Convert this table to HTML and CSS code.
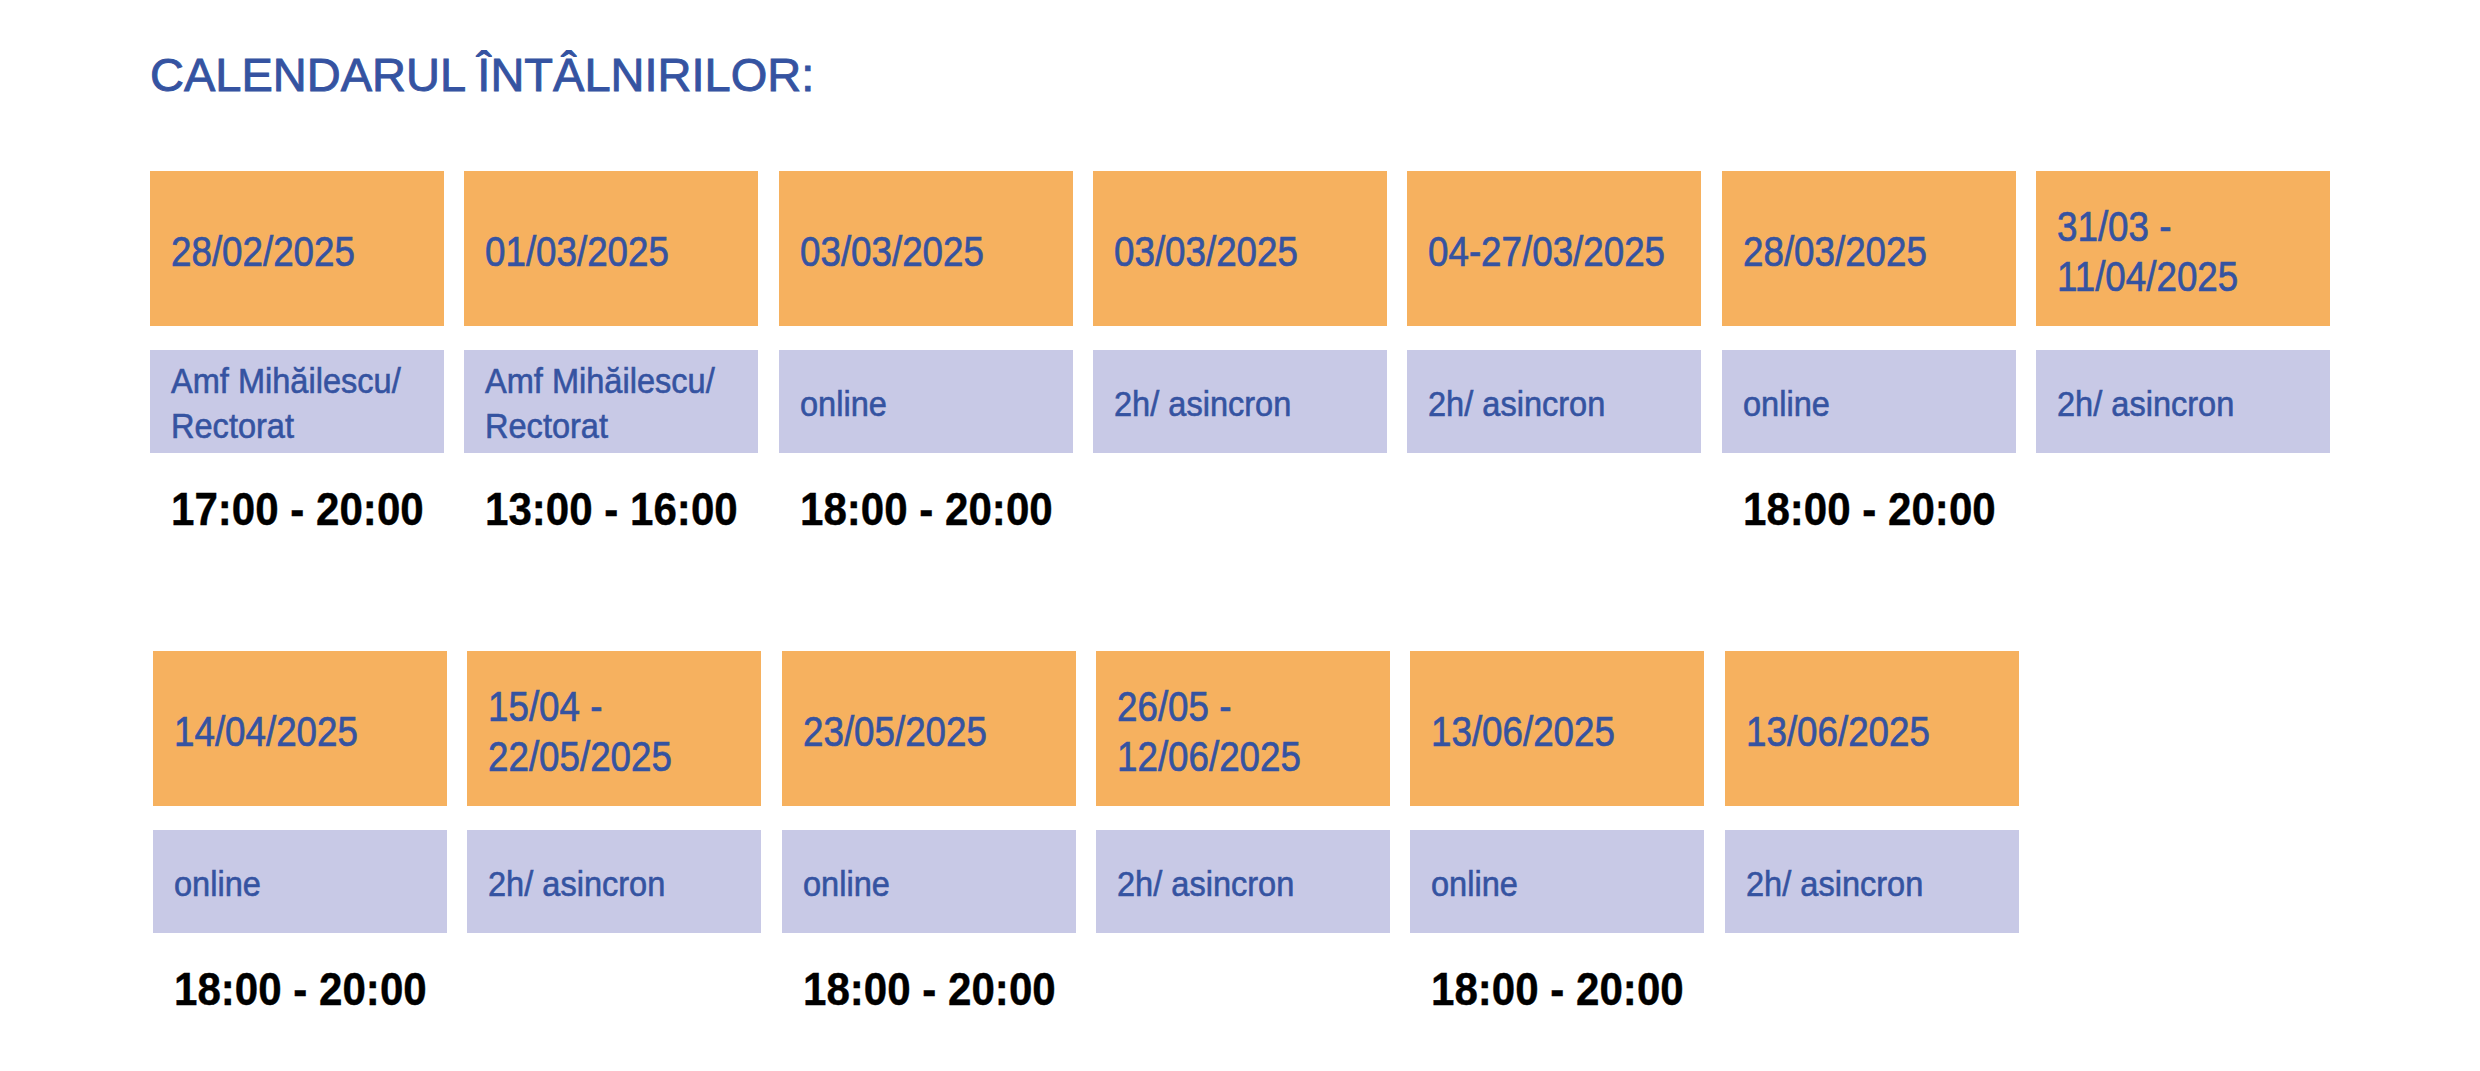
FILE: index.html
```html
<!DOCTYPE html>
<html lang="ro">
<head>
<meta charset="utf-8">
<title>Calendarul întâlnirilor</title>
<link rel="stylesheet" href="styles.css">
</head>
<body>
<div class="page">
  <h1 class="title">CALENDARUL ÎNTÂLNIRILOR:</h1>

  <div class="row row-first">
    <div class="cell">
      <div class="date"><span class="cond">28/02/2025</span></div>
      <div class="place"><span class="cond">Amf Mihăilescu/<br>Rectorat</span></div>
      <div class="time"><span class="cond">17:00 - 20:00</span></div>
    </div>
    <div class="cell">
      <div class="date"><span class="cond">01/03/2025</span></div>
      <div class="place"><span class="cond">Amf Mihăilescu/<br>Rectorat</span></div>
      <div class="time"><span class="cond">13:00 - 16:00</span></div>
    </div>
    <div class="cell">
      <div class="date"><span class="cond">03/03/2025</span></div>
      <div class="place"><span class="cond">online</span></div>
      <div class="time"><span class="cond">18:00 - 20:00</span></div>
    </div>
    <div class="cell">
      <div class="date"><span class="cond">03/03/2025</span></div>
      <div class="place"><span class="cond">2h/ asincron</span></div>
      <div class="time"></div>
    </div>
    <div class="cell">
      <div class="date"><span class="cond">04-27/03/2025</span></div>
      <div class="place"><span class="cond">2h/ asincron</span></div>
      <div class="time"></div>
    </div>
    <div class="cell">
      <div class="date"><span class="cond">28/03/2025</span></div>
      <div class="place"><span class="cond">online</span></div>
      <div class="time"><span class="cond">18:00 - 20:00</span></div>
    </div>
    <div class="cell">
      <div class="date"><span class="cond">31/03 -<br>11/04/2025</span></div>
      <div class="place"><span class="cond">2h/ asincron</span></div>
      <div class="time"></div>
    </div>
  </div>

  <div class="row row-second">
    <div class="cell">
      <div class="date"><span class="cond">14/04/2025</span></div>
      <div class="place"><span class="cond">online</span></div>
      <div class="time"><span class="cond">18:00 - 20:00</span></div>
    </div>
    <div class="cell">
      <div class="date"><span class="cond">15/04 -<br>22/05/2025</span></div>
      <div class="place"><span class="cond">2h/ asincron</span></div>
      <div class="time"></div>
    </div>
    <div class="cell">
      <div class="date"><span class="cond">23/05/2025</span></div>
      <div class="place"><span class="cond">online</span></div>
      <div class="time"><span class="cond">18:00 - 20:00</span></div>
    </div>
    <div class="cell">
      <div class="date"><span class="cond">26/05 -<br>12/06/2025</span></div>
      <div class="place"><span class="cond">2h/ asincron</span></div>
      <div class="time"></div>
    </div>
    <div class="cell">
      <div class="date"><span class="cond">13/06/2025</span></div>
      <div class="place"><span class="cond">online</span></div>
      <div class="time"><span class="cond">18:00 - 20:00</span></div>
    </div>
    <div class="cell">
      <div class="date"><span class="cond">13/06/2025</span></div>
      <div class="place"><span class="cond">2h/ asincron</span></div>
      <div class="time"></div>
    </div>
  </div>
</div>
</body>
</html>
```

FILE: styles.css
```css
html, body {
  margin: 0;
  padding: 0;
  background: #ffffff;
}

.page {
  padding: 52px 0 0 150px;
  font-family: "Liberation Sans", Arial, sans-serif;
}

.title {
  margin: 0;
  font-size: 47px;
  line-height: 45px;
  font-weight: normal;
  color: #3553a1;
  -webkit-text-stroke: 0.9px #3553a1;
}

.row {
  display: grid;
  grid-template-columns: repeat(7, 294px);
  column-gap: 20.33px;
}

.row-first {
  margin-top: 74px;
}

.row-second {
  margin-top: 119px;
  margin-left: 3px;
}

.cell {
  display: flex;
  flex-direction: column;
}

.cond {
  display: inline-block;
  transform-origin: left center;
  white-space: nowrap;
}

.date {
  height: 155px;
  box-sizing: border-box;
  background: #f6b15f;
  display: flex;
  align-items: center;
  padding: 7px 0 0 21px;
  font-size: 42px;
  line-height: 50px;
  color: #3553a1;
  -webkit-text-stroke: 0.7px #3553a1;
}

.date .cond {
  transform: scaleX(0.875);
}

.place {
  margin-top: 24px;
  height: 103px;
  box-sizing: border-box;
  background: #c8c9e6;
  display: flex;
  align-items: center;
  padding: 3px 0 0 21px;
  font-size: 35px;
  line-height: 45px;
  color: #3553a1;
  -webkit-text-stroke: 0.6px #3553a1;
}

.place .cond {
  transform: scaleX(0.93);
}

.time {
  margin-top: 33px;
  height: 46px;
  padding-left: 21px;
  font-size: 46px;
  line-height: 46px;
  font-weight: bold;
  color: #000000;
  -webkit-text-stroke: 0.4px #000000;
}

.time .cond {
  transform: scaleX(0.915);
}
```
